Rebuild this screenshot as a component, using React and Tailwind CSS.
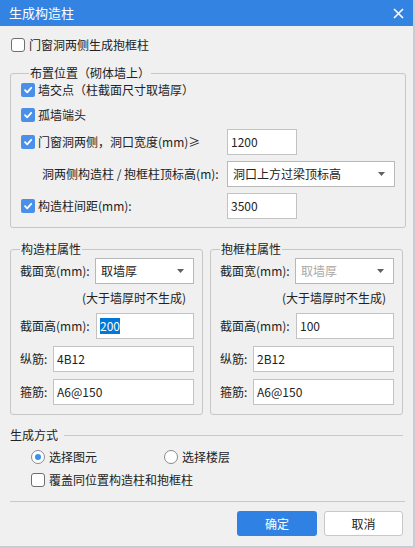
import React from "react";

function Check({ checked }) {
  if (checked) {
    return (
      <span className="flex h-[14px] w-[14px] shrink-0 items-center justify-center rounded-[2px] bg-[#4a90e8]">
        <svg width="10" height="10" viewBox="0 0 10 10">
          <path d="M2 5.2 L4.2 7.3 L8.2 2.8" fill="none" stroke="white" strokeWidth="1.8" strokeLinecap="round" strokeLinejoin="round" />
        </svg>
      </span>
    );
  }
  return <span className="h-[14px] w-[14px] shrink-0 rounded-[3px] border border-[#6e6e6e] bg-white" />;
}

function Radio({ checked }) {
  return (
    <span className="flex h-[14px] w-[14px] shrink-0 items-center justify-center rounded-full border border-[#8a8a8a] bg-white">
      {checked && <span className="h-[6px] w-[6px] rounded-full bg-[#3b8ff0]" />}
    </span>
  );
}

function Arrow() {
  return (
    <svg width="7" height="4" viewBox="0 0 7 4" className="shrink-0">
      <path d="M0 0 H7 L3.5 4 Z" fill="#606060" />
    </svg>
  );
}

function Input({ value, w, selected }) {
  return (
    <div className={`flex h-[26px] ${w} items-center border border-[#c3c3c3] bg-white pl-[3px]`}>
      {selected ? (
        <span className="bg-[#0078d7] text-white">{value}</span>
      ) : (
        <span className="text-[#222]">{value}</span>
      )}
    </div>
  );
}

function Select({ value, w, disabled }) {
  return (
    <div className={`flex h-[26px] ${w} items-center justify-between border border-[#b8b8b8] bg-white pl-[5px] pr-[9px]`}>
      <span className={disabled ? "text-[#a8a8a8]" : "text-[#222]"}>{value}</span>
      <Arrow />
    </div>
  );
}

function PropGroup({ title, disabled, h, zj, gj, selected }) {
  return (
    <fieldset className="w-[194px] rounded-[3px] border border-[#c6c6c6] pb-[9px] pl-[9px] pr-[8px]">
      <legend className="ml-[0px] h-[16px] px-[1px] leading-[16px]">{title}</legend>
      <div className="mt-[1px] flex h-[25px] items-center justify-between">
        <span>截面宽(mm):</span>
        <Select value="取墙厚" w="w-[99px] h-[25px]" disabled={disabled} />
      </div>
      <div className="mt-[7px] h-[16px] pl-[62px] leading-[16px]">(大于墙厚时不生成)</div>
      <div className="mt-[7px] flex items-center justify-between">
        <span>截面高(mm):</span>
        <Input value={h} w="w-[98px] h-[25px]" selected={selected} />
      </div>
      <div className="mt-[7px] flex items-center justify-between">
        <span>纵筋:</span>
        <Input value={zj} w="w-[141px] h-[25px]" />
      </div>
      <div className="mt-[7px] flex items-center justify-between">
        <span>箍筋:</span>
        <Input value={gj} w="w-[141px] h-[25px]" />
      </div>
    </fieldset>
  );
}

export default function App() {
  return (
    <div className="flex h-[548px] w-[415px] flex-col border-b-2 border-r-2 border-[#c9ccd3] bg-[#f0f0f0] font-['Noto_Sans_CJK_SC',sans-serif] text-[12px] leading-[16px] text-[#222]">
      <div className="flex h-[26px] shrink-0 items-center justify-between bg-[#3283e2] pl-[9px] pr-[9px]">
        <span className="text-[13px] text-white">生成构造柱</span>
        <svg width="11" height="11" viewBox="0 0 11 11">
          <path d="M1 1 L10 10 M10 1 L1 10" stroke="white" strokeWidth="1.6" />
        </svg>
      </div>

      <div className="flex flex-col px-[10px]">
        <div className="mt-[11px] flex h-[16px] items-center gap-[4px] pl-[1px]">
          <Check checked={false} />
          <span>门窗洞两侧生成抱框柱</span>
        </div>

        <fieldset className="mt-[12px] w-[395px] rounded-[3px] border border-[#c6c6c6] pb-[8px] pl-[10px] pr-[10px]">
          <legend className="ml-[8px] h-[16px] px-[1px] leading-[16px]">布置位置（砌体墙上）</legend>
          <div className="flex h-[18px] items-center gap-[3px]">
            <Check checked />
            <span>墙交点（柱截面尺寸取墙厚）</span>
          </div>
          <div className="mt-[7px] flex h-[18px] items-center gap-[3px]">
            <Check checked />
            <span>孤墙端头</span>
          </div>
          <div className="mt-[5px] flex h-[26px] items-center">
            <Check checked />
            <span className="ml-[3px] w-[189px]">门窗洞两侧，洞口宽度(mm)≥</span>
            <Input value="1200" w="w-[70px]" />
          </div>
          <div className="mt-[6px] flex h-[26px] items-center">
            <span className="ml-[21px] w-[185px]">洞两侧构造柱 / 抱框柱顶标高(m):</span>
            <Select value="洞口上方过梁顶标高" w="w-[168px]" />
          </div>
          <div className="mt-[6px] flex h-[26px] items-center">
            <Check checked />
            <span className="ml-[3px] w-[189px]">构造柱间距(mm):</span>
            <Input value="3500" w="w-[70px]" />
          </div>
        </fieldset>

        <div className="mt-[13px] flex gap-[7px]">
          <PropGroup title="构造柱属性" h="200" zj="4B12" gj="A6@150" selected />
          <PropGroup title="抱框柱属性" h="100" zj="2B12" gj="A6@150" disabled />
        </div>

        <div className="mt-[12px] flex h-[16px] items-center">
          <span>生成方式</span>
          <div className="ml-[6px] h-px flex-1 bg-[#c8c8c8]" />
        </div>
        <div className="mt-[6px] flex h-[16px] items-center pl-[21px]">
          <Radio checked />
          <span className="ml-[4px] w-[115px]">选择图元</span>
          <Radio checked={false} />
          <span className="ml-[4px]">选择楼层</span>
        </div>
        <div className="mt-[7px] flex h-[16px] items-center gap-[4px] pl-[21px]">
          <Check checked={false} />
          <span>覆盖同位置构造柱和抱框柱</span>
        </div>
        <div className="mt-[13px] h-px w-[395px] bg-[#c8c8c8]" />
        <div className="mt-[9px] flex justify-end gap-[7px] pr-[0px]">
          <div className="flex h-[25px] w-[80px] items-center justify-center rounded-[3px] bg-[#2f82e3] text-white">确定</div>
          <div className="flex h-[25px] w-[79px] items-center justify-center rounded-[3px] border border-[#c8c8c8] bg-white">取消</div>
        </div>
      </div>
    </div>
  );
}
